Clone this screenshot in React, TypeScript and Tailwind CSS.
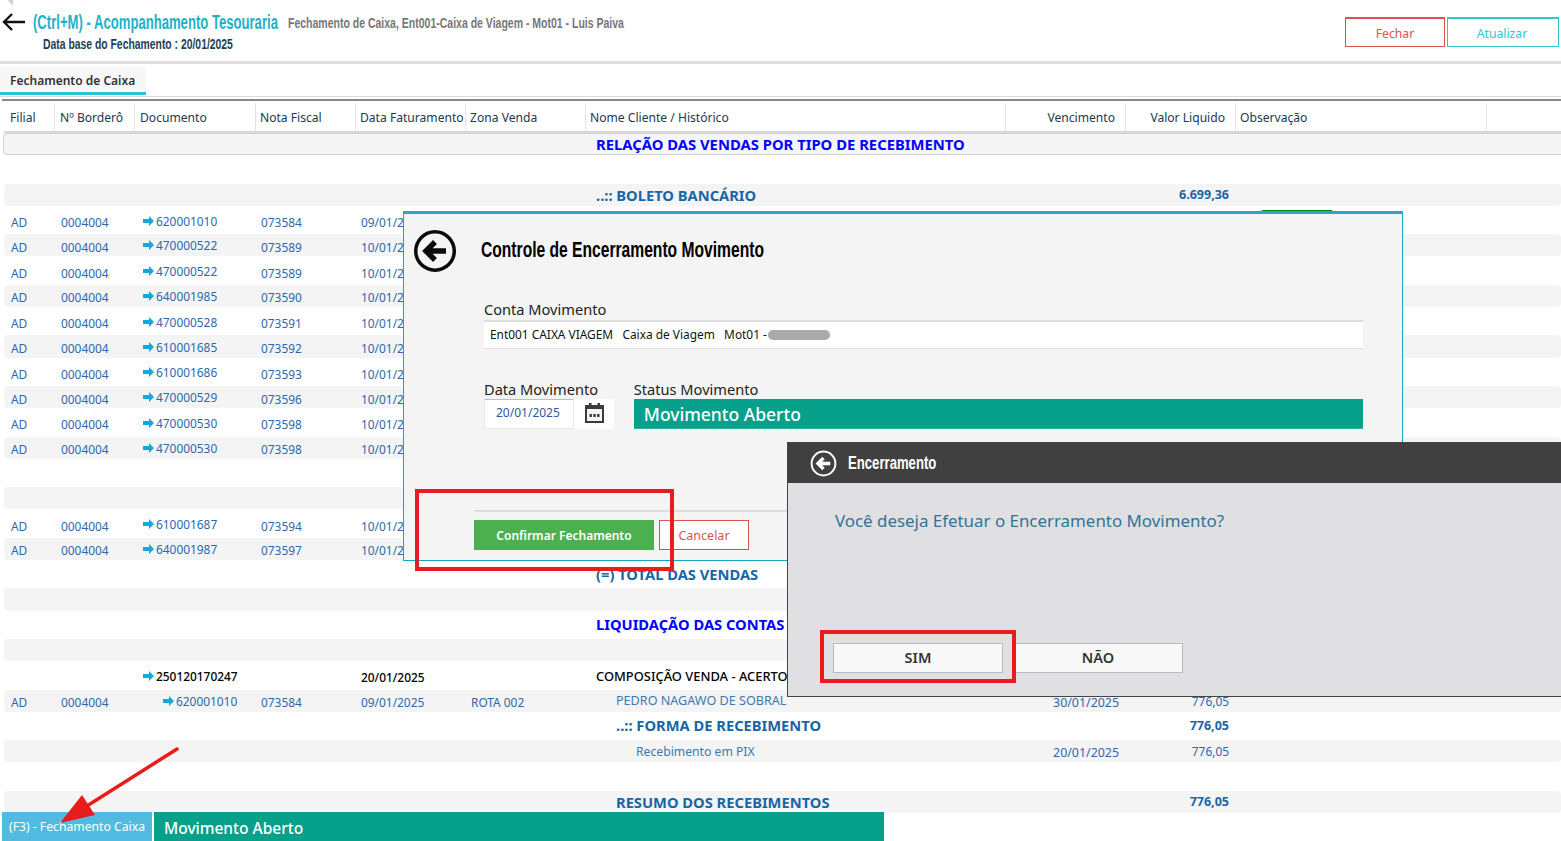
import React from "react";

const COLS = "grid-cols-[51px_80px_121px_100px_110px_120px_420px_120px_110px_251px_1fr]";

type Row = {
  ad?: boolean; bord?: string; doc?: string; nf?: string; date?: string; zona?: string;
  title?: string; titleClass?: string; titlePad?: string; venc?: string; val?: string; valBold?: boolean;
  black?: boolean; docPad?: string;
};

const sale = (doc: string, nf: string, date: string): Row => ({ ad: true, bord: "0004004", doc, nf, date });
const BLUE_W = "font-bold text-[14.7px] leading-[16px] text-[#0000ff] pb-[5px]";
const STEEL_W = "font-bold text-[14.7px] leading-[16px] text-[#1766a6] pb-[5px]";
const STEEL_S = "font-bold text-[14.7px] leading-[16px] text-[#1766a6] pb-[3px]";

const ROWS: Row[] = [
  {},
  { title: "..:: BOLETO BANCÁRIO", titleClass: STEEL_S, val: "6.699,36", valBold: true },
  sale("620001010", "073584", "09/01/2025"),
  sale("470000522", "073589", "10/01/2025"),
  sale("470000522", "073589", "10/01/2025"),
  sale("640001985", "073590", "10/01/2025"),
  sale("470000528", "073591", "10/01/2025"),
  sale("610001685", "073592", "10/01/2025"),
  sale("610001686", "073593", "10/01/2025"),
  sale("470000529", "073596", "10/01/2025"),
  sale("470000530", "073598", "10/01/2025"),
  sale("470000530", "073598", "10/01/2025"),
  {},
  {},
  sale("610001687", "073594", "10/01/2025"),
  sale("640001987", "073597", "10/01/2025"),
  { title: "(=) TOTAL DAS VENDAS", titleClass: STEEL_W },
  {},
  { title: "LIQUIDAÇÃO DAS CONTAS", titleClass: BLUE_W },
  {},
  { doc: "250120170247", date: "20/01/2025", black: true, title: "COMPOSIÇÃO VENDA - ACERTO", titleClass: "text-[12.9px] leading-[16px] font-medium text-black pb-[2px]" },
  { ad: true, bord: "0004004", doc: "620001010", docPad: "pl-7", nf: "073584", date: "09/01/2025", zona: "ROTA 002", title: "PEDRO NAGAWO DE SOBRAL", titleClass: "text-[12.6px] leading-[16px] text-[#3b79b2] pb-[2px]", titlePad: "pl-[30px]", venc: "30/01/2025", val: "776,05" },
  { title: "..:: FORMA DE RECEBIMENTO", titleClass: STEEL_W, titlePad: "pl-[30px]", val: "776,05", valBold: true },
  { title: "Recebimento em PIX", titleClass: "text-[12.2px] leading-[16px] text-[#3b79b2] pb-[2px]", titlePad: "pl-[50px]", venc: "20/01/2025", val: "776,05" },
  {},
  { title: "RESUMO DOS RECEBIMENTOS", titleClass: STEEL_S, titlePad: "pl-[30px]", val: "776,05", valBold: true },
];

function DocArrow() {
  return (
    <svg width="11" height="10" viewBox="0 0 11 10" className="mr-[2px] shrink-0">
      <path d="M0 3h6V0l5 5-5 5V7H0z" fill="#0fa9dc" />
    </svg>
  );
}

function BackIcon({ size, color, sw }: { size: number; color: string; sw: number }) {
  return (
    <svg width={size} height={size} viewBox="0 0 44 44">
      <circle cx="22" cy="22" r={21 - sw / 2} fill="none" stroke={color} strokeWidth={sw} />
      <path d="M33 22H14M22 13l-9 9 9 9" fill="none" stroke={color} strokeWidth="5.5" />
    </svg>
  );
}

function TableRow({ r, i }: { r: Row; i: number }) {
  const striped = i % 2 === 1;
  const tone = r.black ? "text-black font-medium" : "text-[#2b68ad]";
  const valPad = r.valBold ? (striped ? "pb-[3px]" : "pb-[4px]") : r.val ? "pb-[3px]" : "";
  return (
    <div className={`grid ${COLS} items-center text-[11.9px] leading-[16px] whitespace-nowrap ${striped ? "h-[22.3px] rounded-sm bg-[#f4f4f4] pt-[3px]" : "h-[28.3px] pt-[4px]"} ${tone}`}>
      <span className="pl-[7px]">{r.ad ? "AD" : ""}</span>
      <span className="pl-[6px]">{r.bord}</span>
      <span className={`flex items-center pb-[3px] ${r.docPad ?? "pl-2"}`}>
        {r.doc && <DocArrow />}
        {r.doc}
      </span>
      <span className="pl-[5px]">{r.nf}</span>
      <span className="pl-[5px]">{r.date}</span>
      <span className="pl-[5px]">{r.zona}</span>
      <span className={`${r.titlePad ?? "pl-[10px]"} ${r.titleClass ?? ""}`}>{r.title}</span>
      <span className="pr-[7px] pt-[1px] text-right text-[12.4px]">{r.venc}</span>
      <span className={`pr-[7px] text-right ${valPad} ${r.valBold ? "text-[12.5px] font-bold text-[#1766a6]" : ""}`}>{r.val}</span>
      <span />
      <span />
    </div>
  );
}

const HEADS = ["Filial", "Nº Borderô", "Documento", "Nota Fiscal", "Data Faturamento", "Zona Venda", "Nome Cliente / Histórico", "Vencimento", "Valor Liquido", "Observação", ""];

export default function App() {
  return (
    <div className="relative h-[841px] w-full overflow-hidden bg-white font-['Noto_Sans',sans-serif] text-[12px]">
      <svg width="6" height="6" viewBox="0 0 6 6" className="absolute left-2 top-0"><path d="M0 0h5v6z" fill="#cfcfcf" /></svg>

      {/* Top header */}
      <header className="flex h-[61px] items-start justify-between">
        <div className="pl-[2px] pt-[11px]">
          <div className="flex h-[22px] items-center">
            <svg width="23" height="20" viewBox="0 0 23 20" className="mr-2 shrink-0">
              <path d="M23 10H3M10 2l-8 8 8 8" fill="none" stroke="#111" strokeWidth="2.4" />
            </svg>
            <div className="w-[255px] shrink-0">
              <span className="inline-block origin-left scale-x-[0.655] whitespace-nowrap font-['Liberation_Sans',sans-serif] text-[20px] font-bold text-[#1fb1c9]">(Ctrl+M) - Acompanhamento Tesouraria</span>
            </div>
            <span className="inline-block origin-left scale-x-[0.7] whitespace-nowrap pt-[2px] font-['Liberation_Sans',sans-serif] text-[15px] font-bold text-[#777]">Fechamento de Caixa, Ent001-Caixa de Viagem - Mot01 - Luis Paiva</span>
          </div>
          <div className="flex h-[20px] items-center pl-[41px] pt-[2px]">
            <span className="inline-block origin-left scale-x-[0.67] whitespace-nowrap font-['Liberation_Sans',sans-serif] text-[15.5px] font-bold text-[#1f3f55]">Data base do Fechamento : 20/01/2025</span>
          </div>
        </div>
        <div className="flex w-[216px] shrink-0 gap-[2px] pt-[17px]">
          <button className="h-[30px] w-[100px] shrink-0 border border-t-2 border-[#d9534f] pt-[3px] text-[12.2px] text-[#d9534f]">Fechar</button>
          <button className="h-[30px] w-[112px] shrink-0 border border-t-2 border-[#32c5d2] pt-[3px] pr-[2px] text-[12.2px] text-[#32c5d2]">Atualizar</button>
          <button className="h-[30px] w-[40px] shrink-0 border border-t-2 border-[#32c5d2]" />
        </div>
      </header>
      <div className="h-[3px] bg-[#dcdcdc]" />

      {/* Tab */}
      <div className="pt-[3px]">
        <div className="flex h-[28px] w-[146px] items-center border-b-[3px] border-[#2cc0d6] bg-[#f7f7f7] pl-[10px] pt-[2px] text-[12px] font-semibold text-[#333]">Fechamento de Caixa</div>
      </div>
      <div className="mt-px h-px bg-[#dcdcdc]" />
      <div className="ml-[2px] mt-[2px] h-[2px] bg-[#888]" />

      {/* Column headers */}
      <div className="ml-1 pt-[2px]">
        <div className={`grid ${COLS} h-[30px] items-center border-b-2 border-[#d8d8d8] text-[12.1px] whitespace-nowrap text-[#21384f]`}>
          {HEADS.map((h, i) => (
            <div key={i} className={`flex h-full items-center border-[#e4e4e4] pt-[2px] ${i < 10 ? "border-r" : ""} ${i === 7 || i === 8 ? "justify-end pr-[10px]" : i === 0 ? "pl-[6px]" : i === 1 || i === 2 ? "pl-[5px]" : "pl-[4px]"}`}>{h}</div>
          ))}
        </div>
      </div>

      {/* Table body */}
      <div className="ml-1">
        <div className="-ml-px -mr-2 flex h-[22.3px] items-center rounded-sm border border-[#d0d0d0] bg-[#f5f5f5] pl-[592px] text-[14.8px] font-bold whitespace-nowrap text-[#0000ff]">RELAÇÃO DAS VENDAS POR TIPO DE RECEBIMENTO</div>
        <div className="h-[28.3px]" />
        {ROWS.slice(1).map((r, i) => (
          <TableRow key={i} r={r} i={i + 1} />
        ))}
      </div>

      {/* Status bar at the foot */}
      <div className="absolute bottom-0 left-[2px] flex h-[29px] gap-[2px]">
        <div className="flex w-[150px] items-center justify-center bg-[#52bae0] pt-[2px] text-[12.2px] text-white">(F3) - Fechamento Caixa</div>
        <div className="flex w-[730px] items-center bg-[#07a08b] pl-[10px] pt-[4px] text-[15.5px] font-medium text-white">Movimento Aberto</div>
      </div>

      {/* Green badge peeking above the first dialog */}
      <div className="absolute left-[1261px] top-[210px] h-[2px] w-[72px] rounded-t-sm bg-[#008a00]" />

      {/* Dialog: Controle de Encerramento Movimento */}
      <section className="absolute left-[403px] top-[211px] h-[350px] w-[1000px] border border-t-[3px] border-[#16a6c4] border-t-[#2fa3c9] bg-[#f4f4f4] text-[#222]">
        <div className="flex h-[74px] items-center pb-[1px] pl-[9px]">
          <BackIcon size={44} color="#0b0b0b" sw={3.5} />
          <div className="ml-6 w-[300px] pb-[2px]">
            <span className="inline-block origin-left scale-x-[0.71] whitespace-nowrap font-['Liberation_Sans',sans-serif] text-[22px] font-bold text-black">Controle de Encerramento Movimento</span>
          </div>
        </div>
        <div className="pl-[80px] pr-[39px] pt-[10px]">
          <div className="h-[22px] text-[14.6px] leading-[22px]">Conta Movimento</div>
          <div className="flex h-[29px] items-center whitespace-pre border-t-2 border-b border-[#dedede] bg-white pl-[6px] text-[11.9px] text-[#111]">
            Ent001 CAIXA VIAGEM   Caixa de Viagem   Mot01 -
            <span className="ml-[1px] h-[10px] w-[62px] rounded-full bg-[#aaaaad]" />
          </div>
          <div className="mt-[29px] flex">
            <div className="w-[150px]">
              <div className="h-[21px] text-[14.6px] leading-[22px]">Data Movimento</div>
              <div className="flex h-[30px] w-[130px] bg-white">
                <div className="flex h-full w-[90px] items-center border border-t-[#bdbdbd] border-[#e6e6e6] pb-[3px] pl-[11px] text-[12px] text-[#2c5aa0]">20/01/2025</div>
                <div className="flex flex-1 items-center justify-center pb-[2px]">
                  <svg width="21" height="20" viewBox="0 0 21 20">
                    <path d="M1 2h19v18H1z" fill="#3b3b3b" />
                    <rect x="3" y="6" width="15" height="12" fill="#f4f4f4" />
                    <rect x="5" y="0" width="2.5" height="4" fill="#3b3b3b" />
                    <rect x="13.5" y="0" width="2.5" height="4" fill="#3b3b3b" />
                    <rect x="5.5" y="11" width="2.4" height="3" fill="#3b3b3b" />
                    <rect x="9.3" y="11" width="2.4" height="3" fill="#3b3b3b" />
                    <rect x="13.1" y="11" width="2.4" height="3" fill="#3b3b3b" />
                  </svg>
                </div>
              </div>
            </div>
            <div className="w-[730px]">
              <div className="h-[21px] text-[14.6px] leading-[22px]">Status Movimento</div>
              <div className="flex h-[30px] items-center border-b border-[#2fb09c] bg-[#07a08b] pl-[10px] pt-[2px] text-[17.5px] font-medium text-white">Movimento Aberto</div>
            </div>
          </div>
          <div className="ml-[-10px] mt-[81px] h-[2px] w-[340px] bg-[#dddddd]" />
          <div className="ml-[-10px] mt-2 flex gap-[5px]">
            <button className="h-[30px] w-[180px] bg-[#4caf50] pt-[1px] text-[12px] font-semibold text-white">Confirmar Fechamento</button>
            <button className="h-[30px] w-[90px] border border-[#d9534f] bg-white pt-[2px] text-[12.5px] text-[#d9534f]">Cancelar</button>
          </div>
        </div>
      </section>

      {/* Red annotation round the first dialog's buttons */}
      <div className="absolute left-[415px] top-[489px] h-[82px] w-[259px] border-4 border-[#e81c1c]" />

      {/* Dialog: Encerramento */}
      <section className="absolute left-[787px] top-[442px] h-[255px] w-[800px] border border-[#444] bg-[#e0e0e2]">
        <div className="flex h-[40px] items-center bg-[#404040] pl-[22px]">
          <BackIcon size={27} color="#ffffff" sw={3.2} />
          <div className="ml-[11px] w-[120px] pt-[1px]">
            <span className="inline-block origin-left scale-x-[0.73] whitespace-nowrap font-['Liberation_Sans',sans-serif] text-[18px] font-bold text-white">Encerramento</span>
          </div>
        </div>
        <p className="pl-[47px] pt-[26px] text-[16.9px] leading-[24px] text-[#2f7499]">Você deseja Efetuar o Encerramento Movimento?</p>
        <div className="flex pl-[45px] pt-[110px]">
          <button className="h-[30px] w-[170px] border border-[#bbb] bg-[#f8f8f8] text-[14.5px] font-semibold text-[#333]">SIM</button>
          <button className="ml-[10px] h-[30px] w-[170px] border border-[#bbb] bg-[#f8f8f8] text-[14.5px] font-semibold text-[#333]">NÃO</button>
        </div>
      </section>
      <div className="absolute left-[820px] top-[630px] h-[53px] w-[196px] border-4 border-[#e81c1c]" />

      {/* Red arrow annotation */}
      <svg className="absolute left-[55px] top-[745px]" width="130" height="82" viewBox="0 0 130 82">
        <path d="M122 4L24 66" stroke="#e81c1c" strokeWidth="3.5" strokeLinecap="round" />
        <path d="M5 78L27 50 40 70z" fill="#e81c1c" />
      </svg>
    </div>
  );
}
